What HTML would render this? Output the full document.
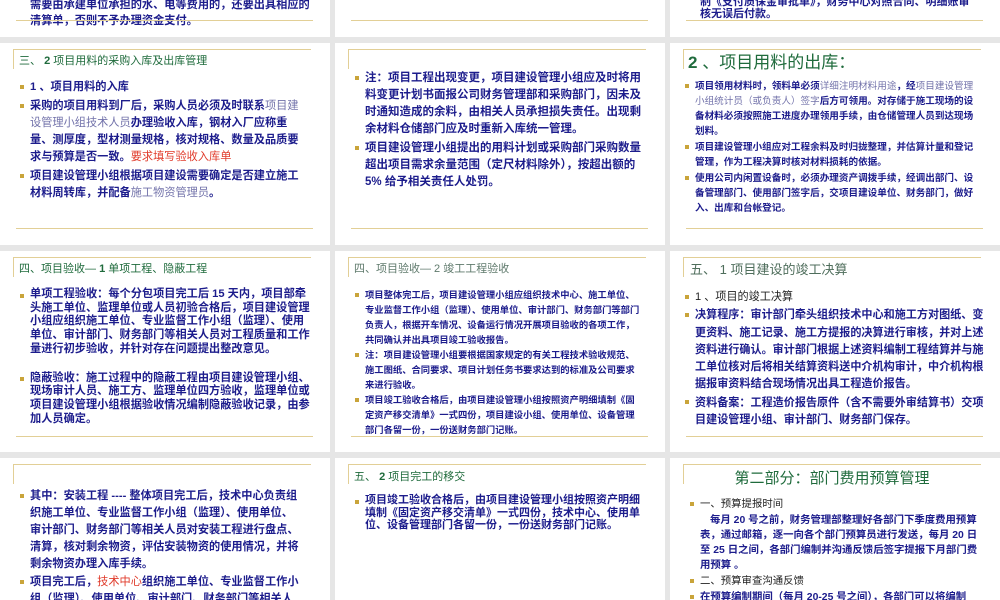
<!DOCTYPE html>
<html><head><meta charset="utf-8"><style>
*{margin:0;padding:0;box-sizing:border-box}
body{width:1000px;height:600px;background:#e6e6e6;position:relative;overflow:hidden;font-family:"Liberation Sans","Noto Sans CJK SC",sans-serif;}
.p{position:absolute;background:#fff;overflow:hidden}
.tb{position:absolute;left:13px;width:298px;height:20px;border-top:1px solid #e2cf96;border-left:1px solid #e2cf96}
.bl{position:absolute;left:16px;width:297px;border-top:1px solid #e2cf96}
.t{position:absolute;color:#1f6b3c;white-space:nowrap}
.tx{position:absolute;color:#1c1c8c;font-weight:bold}
.tx p{position:relative;padding-left:10px}
.tx p:before{content:"";position:absolute;left:0;top:0.5em;width:4px;height:4px;background:#c9a43a}
.g{color:#7272aa;font-weight:normal}
.r{color:#e03a2a;font-weight:normal}
.k{color:#222}
</style></head><body>

<!-- row 0 -->
<div class="p" style="left:0;top:0;width:330px;height:37px">
<div class="tx" style="left:30px;top:-3px;width:284px;font-size:11.2px;line-height:16px">需要由承建单位承担的水、电等费用的，还要出具相应的清算单，否则不予办理资金支付。</div>
<div class="bl" style="top:20px"></div></div>
<div class="p" style="left:335px;top:0;width:330px;height:37px"><div class="bl" style="top:20px"></div></div>
<div class="p" style="left:670px;top:0;width:330px;height:37px">
<div class="tx" style="left:30px;top:-4px;width:274px;font-size:11px;line-height:12px">制《支付质保金审批单》，财务中心对照合同、明细账审核无误后付款。</div>
<div class="bl" style="top:20px"></div></div>

<!-- row 1 -->
<div class="p" style="left:0;top:43px;width:330px;height:202px">
<div class="tb" style="top:6px"></div>
<div class="t" style="left:19px;top:9px;font-size:11px">三、 <b>2</b> 项目用料的采购入库及出库管理</div>
<div class="tx" style="left:20px;top:36px;width:286px;font-size:11.2px;line-height:17px">
<p style="margin-bottom:2px">1 、项目用料的入库</p>
<p style="margin-bottom:2px">采购的项目用料到厂后，采购人员必须及时联系<span class="g">项目建设管理小组技术人员</span>办理验收入库，钢材入厂应称重量、测厚度，型材测量规格，核对规格、数量及品质要求与预算是否一致。<span class="r">要求填写验收入库单</span></p>
<p>项目建设管理小组根据项目建设需要确定是否建立施工材料周转库，并配备<span class="g">施工物资管理员</span>。</p></div>
<div class="bl" style="top:185px"></div></div>

<div class="p" style="left:335px;top:43px;width:330px;height:202px">
<div class="tb" style="top:6px"></div>
<div class="tx" style="left:20px;top:27px;width:290px;font-size:11.5px;line-height:17px">
<p style="margin-bottom:2px">注：项目工程出现变更，项目建设管理小组应及时将用料变更计划书面报公司财务管理部和采购部门，因未及时通知造成的余料，由相关人员承担损失责任。出现剩余材料仓储部门应及时重新入库统一管理。</p>
<p>项目建设管理小组提出的用料计划或采购部门采购数量超出项目需求余量范围（定尺材料除外），按超出额的 5% 给予相关责任人处罚。</p></div>
<div class="bl" style="top:185px"></div></div>

<div class="p" style="left:670px;top:43px;width:330px;height:202px">
<div class="tb" style="top:6px"></div>
<div class="t" style="left:18px;top:5px;font-size:17px"><b>2</b> 、项目用料的出库：</div>
<div class="tx" style="left:15px;top:36px;width:296px;font-size:9.6px;line-height:15px">
<p style="margin-bottom:1px">项目领用材料时，领料单必须<span class="g">详细注明材料用途</span>，经<span class="g">项目建设管理小组统计员（或负责人）签字</span>后方可领用。对存储于施工现场的设备材料必须按照施工进度办理领用手续，由仓储管理人员到达现场划料。</p>
<p style="margin-bottom:1px">项目建设管理小组应对工程余料及时归拢整理，并估算计量和登记管理，作为工程决算时核对材料损耗的依据。</p>
<p>使用公司内闲置设备时，必须办理资产调拨手续，经调出部门、设备管理部门、使用部门签字后，交项目建设单位、财务部门，做好入、出库和台帐登记。</p></div>
<div class="bl" style="top:185px"></div></div>

<!-- row 2 -->
<div class="p" style="left:0;top:251px;width:330px;height:201px">
<div class="tb" style="top:6px"></div>
<div class="t" style="left:19px;top:9px;font-size:11px">四、项目验收— <b>1</b> 单项工程、隐蔽工程</div>
<div class="tx" style="left:20px;top:37px;width:294px;font-size:11.2px;line-height:13.7px">
<p style="margin-bottom:15px">单项工程验收：每个分包项目完工后 15 天内，项目部牵头施工单位、监理单位或人员初验合格后，项目建设管理小组应组织施工单位、专业监督工作小组（监理）、使用单位、审计部门、财务部门等相关人员对工程质量和工作量进行初步验收，并针对存在问题提出整改意见。</p>
<p>隐蔽验收：施工过程中的隐蔽工程由项目建设管理小组、现场审计人员、施工方、监理单位四方验收，监理单位或项目建设管理小组根据验收情况编制隐蔽验收记录，由参加人员确定。</p></div>
<div class="bl" style="top:185px"></div></div>

<div class="p" style="left:335px;top:251px;width:330px;height:201px">
<div class="tb" style="top:6px"></div>
<div class="t" style="left:19px;top:9px;font-size:11px;color:#5f7a6c">四、项目验收— 2 竣工工程验收</div>
<div class="tx" style="left:20px;top:37px;width:286px;font-size:9.3px;line-height:15px">
<p style="margin-bottom:0">项目整体完工后，项目建设管理小组应组织技术中心、施工单位、专业监督工作小组（监理）、使用单位、审计部门、财务部门等部门负责人，根据开车情况、设备运行情况开展项目验收的各项工作，共同确认并出具项目竣工验收报告。</p>
<p style="margin-bottom:0">注：项目建设管理小组要根据国家规定的有关工程技术验收规范、施工图纸、合同要求、项目计划任务书要求达到的标准及公司要求来进行验收。</p>
<p>项目竣工验收合格后，由项目建设管理小组按照资产明细填制《固定资产移交清单》一式四份，项目建设小组、使用单位、设备管理部门各留一份，一份送财务部门记账。</p></div>
<div class="bl" style="top:185px"></div></div>

<div class="p" style="left:670px;top:251px;width:330px;height:201px">
<div class="tb" style="top:6px"></div>
<div class="t" style="left:20px;top:8px;font-size:13px;color:#4f6e5c">五、 1 项目建设的竣工决算</div>
<div class="tx" style="left:15px;top:38px;width:302px;font-size:11.1px;line-height:17.3px">
<p class="k" style="font-weight:normal;margin-bottom:1px">1 、项目的竣工决算</p>
<p style="margin-bottom:1px">决算程序：审计部门牵头组织技术中心和施工方对图纸、变更资料、施工记录、施工方提报的决算进行审核，并对上述资料进行确认。审计部门根据上述资料编制工程结算并与施工单位核对后将相关结算资料送中介机构审计，中介机构根据报审资料结合现场情况出具工程造价报告。</p>
<p>资料备案：工程造价报告原件（含不需要外审结算书）交项目建设管理小组、审计部门、财务部门保存。</p></div>
<div class="bl" style="top:185px"></div></div>

<!-- row 3 -->
<div class="p" style="left:0;top:458px;width:330px;height:142px">
<div class="tb" style="top:6px"></div>
<div class="tx" style="left:20px;top:30px;width:282px;font-size:11.2px;line-height:17px">
<p style="margin-bottom:1px">其中：安装工程 ---- 整体项目完工后，技术中心负责组织施工单位、专业监督工作小组（监理）、使用单位、审计部门、财务部门等相关人员对安装工程进行盘点、清算，核对剩余物资，评估安装物资的使用情况，并将剩余物资办理入库手续。</p>
<p>项目完工后，<span class="r">技术中心</span>组织施工单位、专业监督工作小组（监理）、使用单位、审计部门、财务部门等相关人员</p></div></div>

<div class="p" style="left:335px;top:458px;width:330px;height:142px">
<div class="tb" style="top:6px"></div>
<div class="t" style="left:19px;top:10px;font-size:11px">五、 <b>2</b> 项目完工的移交</div>
<div class="tx" style="left:20px;top:36px;width:292px;font-size:11px;line-height:12.5px">
<p>项目竣工验收合格后，由项目建设管理小组按照资产明细填制《固定资产移交清单》一式四份，技术中心、使用单位、设备管理部门各留一份，一份送财务部门记账。</p></div></div>

<div class="p" style="left:670px;top:458px;width:330px;height:142px">
<div class="tb" style="top:6px"></div>
<div class="t" style="left:13px;width:298px;text-align:center;top:9px;font-size:15px">第二部分：部门费用预算管理</div>
<div class="tx" style="left:20px;top:39px;width:292px;font-size:10.4px;line-height:15px">
<p class="k" style="font-weight:normal;margin-bottom:1px">一、预算提报时间</p>
<div style="padding-left:10px;text-indent:10px;margin-bottom:1px">每月 20 号之前，财务管理部整理好各部门下季度费用预算表，通过邮箱，逐一向各个部门预算员进行发送，每月 20 日至 25 日之间，各部门编制并沟通反馈后签字提报下月部门费用预算 。</div>
<p class="k" style="font-weight:normal;margin-bottom:1px">二、预算审查沟通反馈</p>
<p>在预算编制期间（每月 20-25 号之间），各部门可以将编制</p></div></div>

</body></html>
